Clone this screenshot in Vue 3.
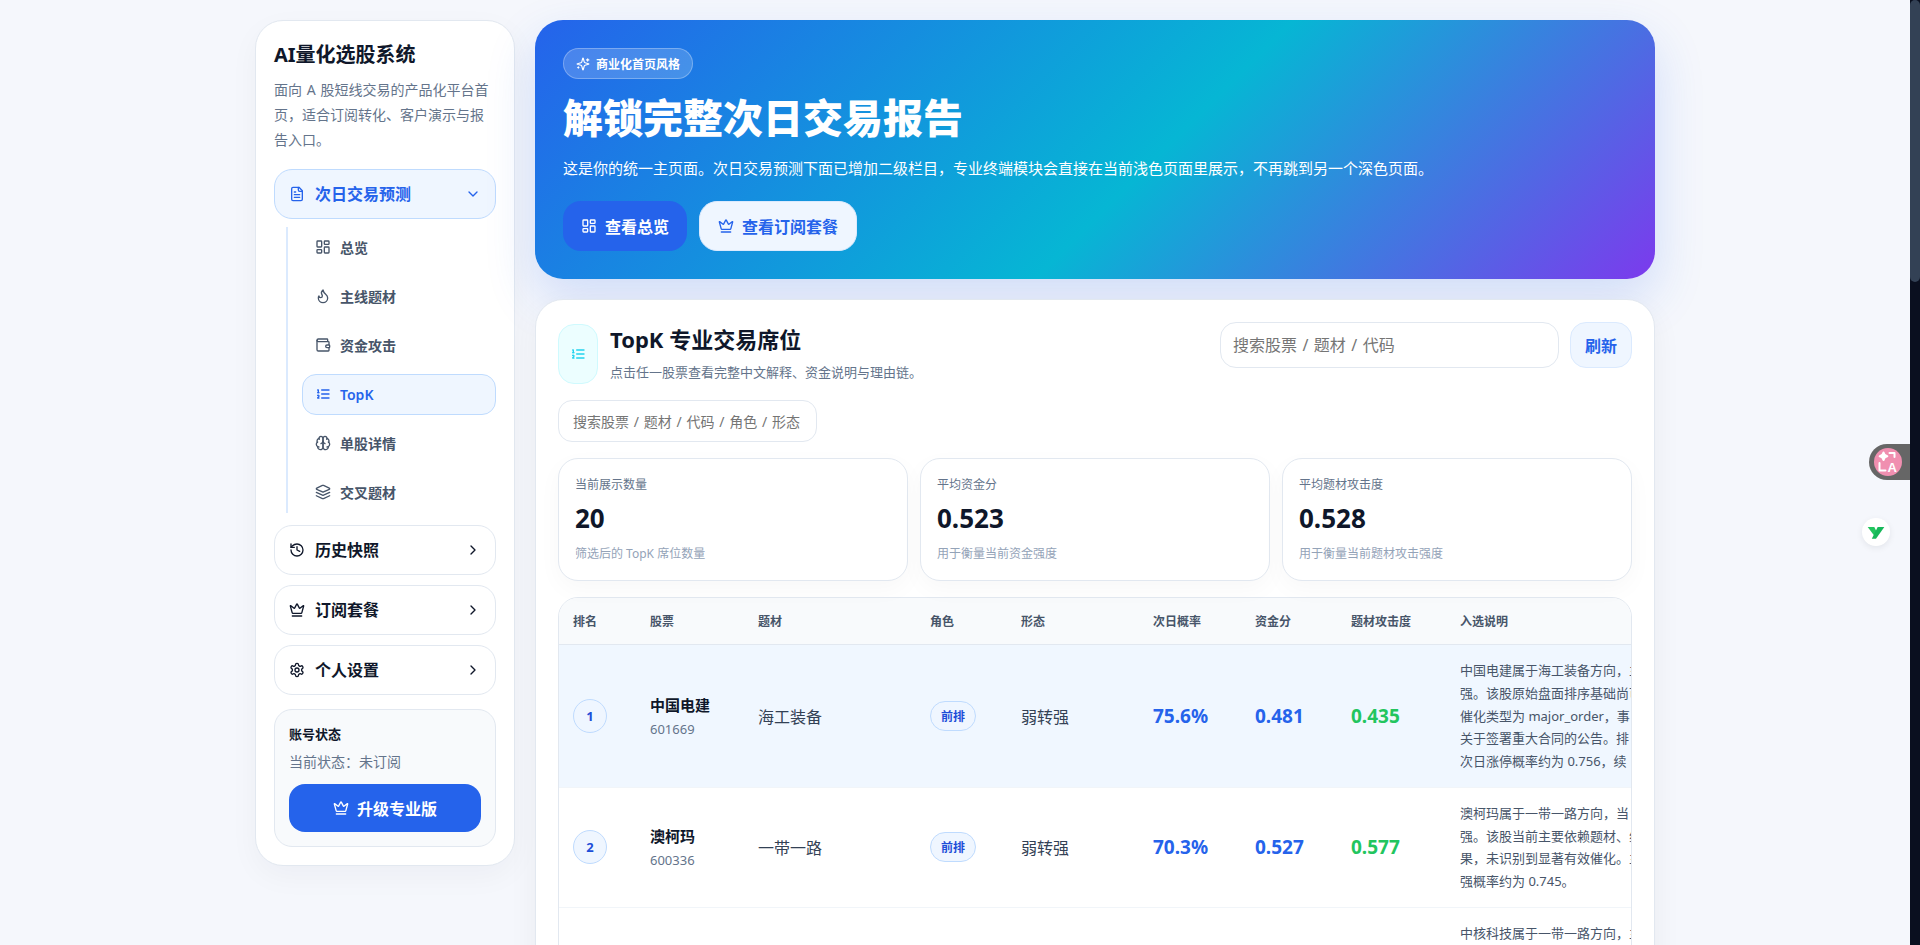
<script setup>
import { h } from 'vue'

const icons = {
  file: ['M15 2H6a2 2 0 0 0-2 2v16a2 2 0 0 0 2 2h12a2 2 0 0 0 2-2V7Z', 'M14 2v4a2 2 0 0 0 2 2h4', 'M10 9H8', 'M16 13H8', 'M16 17H8'],
  down: ['m6 9 6 6 6-6'],
  right: ['m9 18 6-6-6-6'],
  dashboard: ['M4 3h5a1 1 0 0 1 1 1v7a1 1 0 0 1-1 1H4a1 1 0 0 1-1-1V4a1 1 0 0 1 1-1Z', 'M15 3h5a1 1 0 0 1 1 1v3a1 1 0 0 1-1 1h-5a1 1 0 0 1-1-1V4a1 1 0 0 1 1-1Z', 'M15 12h5a1 1 0 0 1 1 1v7a1 1 0 0 1-1 1h-5a1 1 0 0 1-1-1v-7a1 1 0 0 1 1-1Z', 'M4 16h5a1 1 0 0 1 1 1v3a1 1 0 0 1-1 1H4a1 1 0 0 1-1-1v-3a1 1 0 0 1 1-1Z'],
  flame: ['M8.5 14.5A2.5 2.5 0 0 0 11 12c0-1.38-.5-2-1-3-1.072-2.143-.224-4.054 2-6 .5 2.5 2 4.9 4 6.5 2 1.6 3 3.5 3 5.5a7 7 0 1 1-14 0c0-1.153.433-2.294 1-3a2.5 2.5 0 0 0 2.5 2.5z'],
  wallet: ['M19 7V4a1 1 0 0 0-1-1H5a2 2 0 0 0 0 4h15a1 1 0 0 1 1 1v4h-3a2 2 0 0 0 0 4h3a1 1 0 0 0 1-1v-2a1 1 0 0 0-1-1', 'M3 5v14a2 2 0 0 0 2 2h15a1 1 0 0 0 1-1v-4'],
  list: ['M10 12h11', 'M10 18h11', 'M10 6h11', 'M4 10h2', 'M4 6h1v4', 'M6 18H4c0-1 2-2 2-3s-1-1.5-2-1'],
  brain: ['M12 5a3 3 0 1 0-5.997.125 4 4 0 0 0-2.526 5.77 4 4 0 0 0 .556 6.588A4 4 0 1 0 12 18Z', 'M12 5a3 3 0 1 1 5.997.125 4 4 0 0 1 2.526 5.77 4 4 0 0 1-.556 6.588A4 4 0 1 1 12 18Z', 'M15 13a4.5 4.5 0 0 1-3-4 4.5 4.5 0 0 1-3 4', 'M17.599 6.5a3 3 0 0 0 .399-1.375', 'M6.003 5.125A3 3 0 0 0 6.401 6.5', 'M3.477 10.896a4 4 0 0 1 .585-.396', 'M19.938 10.5a4 4 0 0 1 .585.396', 'M6 18a4 4 0 0 1-1.967-.516', 'M19.967 17.484A4 4 0 0 1 18 18'],
  layers: ['m12.83 2.18a2 2 0 0 0-1.66 0L2.6 6.08a1 1 0 0 0 0 1.83l8.58 3.91a2 2 0 0 0 1.66 0l8.58-3.9a1 1 0 0 0 0-1.83Z', 'm22 17.65-9.17 4.16a2 2 0 0 1-1.66 0L2 17.65', 'm22 12.65-9.17 4.16a2 2 0 0 1-1.66 0L2 12.65'],
  history: ['M3 12a9 9 0 1 0 9-9 9.75 9.75 0 0 0-6.74 2.74L3 8', 'M3 3v5h5', 'M12 7v5l4 2'],
  crown: ['M11.562 3.266a.5.5 0 0 1 .876 0L15.39 8.87a1 1 0 0 0 1.516.294L21.183 5.5a.5.5 0 0 1 .798.519l-2.834 10.246a1 1 0 0 1-.956.734H5.81a1 1 0 0 1-.957-.734L2.02 6.02a.5.5 0 0 1 .798-.519l4.276 3.664a1 1 0 0 0 1.516-.294z', 'M5 21h14'],
  settings: ['M12.22 2h-.44a2 2 0 0 0-2 2v.18a2 2 0 0 1-1 1.73l-.43.25a2 2 0 0 1-2 0l-.15-.08a2 2 0 0 0-2.73.73l-.22.38a2 2 0 0 0 .73 2.73l.15.1a2 2 0 0 1 1 1.72v.51a2 2 0 0 1-1 1.74l-.15.09a2 2 0 0 0-.73 2.73l.22.38a2 2 0 0 0 2.73.73l.15-.08a2 2 0 0 1 2 0l.43.25a2 2 0 0 1 1 1.73V20a2 2 0 0 0 2 2h.44a2 2 0 0 0 2-2v-.18a2 2 0 0 1 1-1.73l.43-.25a2 2 0 0 1 2 0l.15.08a2 2 0 0 0 2.73-.73l.22-.39a2 2 0 0 0-.73-2.73l-.15-.08a2 2 0 0 1-1-1.74v-.5a2 2 0 0 1 1-1.74l.15-.09a2 2 0 0 0 .73-2.73l-.22-.38a2 2 0 0 0-2.73-.73l-.15.08a2 2 0 0 1-2 0l-.43-.25a2 2 0 0 1-1-1.73V4a2 2 0 0 0-2-2z', 'M15 12a3 3 0 1 1-6 0 3 3 0 0 1 6 0Z'],
  sparkles: ['M9.937 15.5A2 2 0 0 0 8.5 14.063l-6.135-1.582a.5.5 0 0 1 0-.962L8.5 9.936A2 2 0 0 0 9.937 8.5l1.582-6.135a.5.5 0 0 1 .963 0L14.063 8.5A2 2 0 0 0 15.5 9.937l6.135 1.581a.5.5 0 0 1 0 .964L15.5 14.063a2 2 0 0 0-1.437 1.437l-1.582 6.135a.5.5 0 0 1-.963 0z', 'M20 3v4', 'M22 5h-4', 'M4 17v2', 'M5 18H3']
}

const Icon = (props) =>
  h(
    'svg',
    {
      viewBox: '0 0 24 24',
      width: props.size || 16,
      height: props.size || 16,
      fill: 'none',
      stroke: 'currentColor',
      'stroke-width': 2,
      'stroke-linecap': 'round',
      'stroke-linejoin': 'round',
      style: { flexShrink: 0 }
    },
    icons[props.name].map((d) => h('path', { d }))
  )
Icon.props = ['name', 'size']

const subItems = [
  { label: '总览', icon: 'dashboard' },
  { label: '主线题材', icon: 'flame' },
  { label: '资金攻击', icon: 'wallet' },
  { label: 'TopK', icon: 'list', active: true },
  { label: '单股详情', icon: 'brain' },
  { label: '交叉题材', icon: 'layers' }
]

const navItems = [
  { label: '历史快照', icon: 'history' },
  { label: '订阅套餐', icon: 'crown' },
  { label: '个人设置', icon: 'settings' }
]

const kpis = [
  { label: '当前展示数量', value: '20', note: '筛选后的 TopK 席位数量' },
  { label: '平均资金分', value: '0.523', note: '用于衡量当前资金强度' },
  { label: '平均题材攻击度', value: '0.528', note: '用于衡量当前题材攻击强度' }
]

const columns = ['排名', '股票', '题材', '角色', '形态', '次日概率', '资金分', '题材攻击度', '入选说明']

const rows = [
  {
    rank: 1,
    name: '中国电建',
    code: '601669',
    theme: '海工装备',
    role: '前排',
    form: '弱转强',
    prob: '75.6%',
    fund: '0.481',
    heat: '0.435',
    highlight: true,
    note: [
      '中国电建属于海工装备方向，主',
      '强。该股原始盘面排序基础尚可',
      '催化类型为 major_order，事',
      '关于签署重大合同的公告。排',
      '次日涨停概率约为 0.756，续'
    ]
  },
  {
    rank: 2,
    name: '澳柯玛',
    code: '600336',
    theme: '一带一路',
    role: '前排',
    form: '弱转强',
    prob: '70.3%',
    fund: '0.527',
    heat: '0.577',
    note: [
      '澳柯玛属于一带一路方向，当',
      '强。该股当前主要依赖题材、线',
      '果，未识别到显著有效催化。主',
      '强概率约为 0.745。'
    ]
  },
  {
    rank: 3,
    name: '中核科技',
    theme: '一带一路',
    note: ['中核科技属于一带一路方向，主', '&nbsp;', '&nbsp;', '&nbsp;', '&nbsp;']
  }
]
</script>

<template>
  <div class="shell">
    <div class="page">
      <aside class="side">
        <h2 class="brand">AI量化选股系统</h2>
        <p class="brand-desc">面向 A 股短线交易的产品化平台首页，适合订阅转化、客户演示与报告入口。</p>

        <nav class="nav">
          <div>
            <div class="nav-item nav-open">
              <Icon name="file" />
              <span class="nav-label">次日交易预测</span>
              <Icon name="down" />
            </div>
            <div class="sub-list">
              <div v-for="item in subItems" :key="item.label" class="sub-item" :class="{ 'sub-active': item.active }">
                <Icon :name="item.icon" />
                <span>{{ item.label }}</span>
              </div>
            </div>
          </div>
          <div v-for="item in navItems" :key="item.label" class="nav-item">
            <Icon :name="item.icon" />
            <span class="nav-label">{{ item.label }}</span>
            <Icon name="right" />
          </div>
        </nav>

        <div class="account">
          <div class="account-title">账号状态</div>
          <div class="account-status">当前状态：未订阅</div>
          <button class="upgrade"><Icon name="crown" />升级专业版</button>
        </div>
      </aside>

      <main class="main">
        <section class="hero">
          <div class="badge"><Icon name="sparkles" :size="14" />商业化首页风格</div>
          <h1 class="hero-title">解锁完整次日交易报告</h1>
          <p class="hero-text">这是你的统一主页面。次日交易预测下面已增加二级栏目，专业终端模块会直接在当前浅色页面里展示，不再跳到另一个深色页面。</p>
          <div class="hero-actions">
            <button class="btn btn-primary"><Icon name="dashboard" />查看总览</button>
            <button class="btn btn-light"><Icon name="crown" />查看订阅套餐</button>
          </div>
        </section>

        <section class="panel">
          <div class="panel-head">
            <div class="panel-heading">
              <div class="panel-icon"><Icon name="list" /></div>
              <div>
                <h2 class="panel-title">TopK 专业交易席位</h2>
                <p class="panel-sub">点击任一股票查看完整中文解释、资金说明与理由链。</p>
              </div>
            </div>
            <div class="panel-tools">
              <input class="search" placeholder="搜索股票 / 题材 / 代码" />
              <button class="refresh">刷新</button>
            </div>
          </div>

          <input class="filter" placeholder="搜索股票 / 题材 / 代码 / 角色 / 形态" />

          <div class="kpis">
            <div v-for="kpi in kpis" :key="kpi.label" class="kpi">
              <div class="kpi-label">{{ kpi.label }}</div>
              <div class="kpi-value">{{ kpi.value }}</div>
              <div class="kpi-note">{{ kpi.note }}</div>
            </div>
          </div>

          <div class="table-wrap">
            <table class="table">
              <colgroup>
                <col style="width: 77px" />
                <col style="width: 108px" />
                <col style="width: 172px" />
                <col style="width: 91px" />
                <col style="width: 132px" />
                <col style="width: 102px" />
                <col style="width: 96px" />
                <col style="width: 109px" />
                <col style="width: 186px" />
              </colgroup>
              <thead>
                <tr>
                  <th v-for="col in columns" :key="col">{{ col }}</th>
                </tr>
              </thead>
              <tbody>
                <tr v-for="row in rows" :key="row.rank" :class="{ 'row-on': row.highlight }">
                  <td><span class="rank">{{ row.rank }}</span></td>
                  <td>
                    <div class="stock-name">{{ row.name }}</div>
                    <div class="stock-code">{{ row.code }}</div>
                  </td>
                  <td class="plain">{{ row.theme }}</td>
                  <td><span v-if="row.role" class="role">{{ row.role }}</span></td>
                  <td class="plain">{{ row.form }}</td>
                  <td class="num">{{ row.prob }}</td>
                  <td class="num">{{ row.fund }}</td>
                  <td class="num heat">{{ row.heat }}</td>
                  <td class="note">
                    <div v-for="(line, i) in row.note" :key="i" v-html="line"></div>
                  </td>
                </tr>
              </tbody>
            </table>
          </div>
        </section>
      </main>
    </div>

    <div class="rail"><div class="rail-thumb"></div></div>

    <div class="float-translate">
      <span class="float-dot">
        <svg viewBox="0 0 24 24" width="24" height="24" fill="none" stroke="#fff" stroke-width="2" stroke-linecap="round" stroke-linejoin="round">
          <path d="M7.5 2.5c.4 2.4 1.4 3.4 3.8 3.8-2.4.4-3.4 1.4-3.8 3.8-.4-2.4-1.4-3.4-3.8-3.8 2.4-.4 3.4-1.4 3.8-3.8Z" fill="#fff" />
          <path d="M13.5 3h5v4" />
          <path d="M3.5 13v7.5h6" />
          <text x="11.5" y="21.5" font-size="13" font-weight="700" fill="#fff" stroke="none" font-family="Liberation Sans, sans-serif">A</text>
        </svg>
      </span>
    </div>
    <div class="float-logo">
      <svg viewBox="0 0 24 24" width="20" height="20">
        <path d="M2 6h8l3 6-3.5 4Z" fill="#22c55e" />
        <path d="M14 6h8L12 20H7Z" fill="#16b85a" />
      </svg>
    </div>
  </div>
</template>

<style>
body {
  background: #f5f7fc;
}
</style>

<style scoped>
.shell {
  padding-right: 10px;
}
.page {
  width: 1400px;
  min-height: 3167px;
  margin: 0 auto;
  padding: 20px 0;
  box-sizing: border-box;
  display: flex;
  align-items: flex-start;
  gap: 20px;
  font-family: "Noto Sans", "Noto Sans CJK SC", sans-serif;
  color: #0f172a;
}
h1, h2, p {
  margin: 0;
}
button {
  font-family: inherit;
  cursor: pointer;
}

.side {
  width: 260px;
  flex-shrink: 0;
  box-sizing: border-box;
  padding: 18px;
  background: #fff;
  border: 1px solid #e2e8f0;
  border-radius: 28px;
  box-shadow: 0 10px 30px rgba(15, 23, 42, 0.04);
}
.brand {
  font-size: 20px;
  line-height: 32px;
  font-weight: 700;
}
.brand-desc {
  margin-top: 6px;
  font-size: 14px;
  line-height: 25.2px;
  color: #64748b;
  word-spacing: 0.08em;
}
.nav {
  margin-top: 16px;
  display: flex;
  flex-direction: column;
  gap: 10px;
}
.nav-item {
  height: 50px;
  box-sizing: border-box;
  padding: 0 14px;
  display: flex;
  align-items: center;
  gap: 10px;
  background: #fff;
  border: 1px solid #e2e8f0;
  border-radius: 18px;
  font-size: 16px;
  font-weight: 700;
}
.nav-label {
  flex: 1;
  margin-top: -2px;
}
.nav-open {
  background: #eff6ff;
  border-color: #bfdbfe;
  color: #2563eb;
}
.sub-list {
  margin: 8px 0 2px 12px;
  padding-left: 14px;
  border-left: 2px solid #dbeafe;
  display: flex;
  flex-direction: column;
  gap: 8px;
}
.sub-item {
  height: 41px;
  box-sizing: border-box;
  padding: 0 12px;
  display: flex;
  align-items: center;
  gap: 9px;
  border: 1px solid transparent;
  border-radius: 14px;
  font-size: 14px;
  font-weight: 600;
  color: #475569;
}
.sub-active {
  background: #eff6ff;
  border-color: #bfdbfe;
  color: #2563eb;
}
.account {
  margin-top: 14px;
  padding: 14px;
  background: #f8fafc;
  border: 1px solid #e2e8f0;
  border-radius: 18px;
}
.account-title {
  font-size: 13px;
  line-height: 20px;
  font-weight: 700;
}
.account-status {
  margin-top: 7px;
  font-size: 14px;
  line-height: 22px;
  color: #64748b;
}
.upgrade {
  margin-top: 11px;
  width: 100%;
  height: 48px;
  display: flex;
  align-items: center;
  justify-content: center;
  gap: 8px;
  background: #2563eb;
  border: none;
  border-radius: 16px;
  color: #fff;
  font-size: 16px;
  font-weight: 700;
}

.main {
  flex: 1;
  min-width: 0;
  align-self: stretch;
  display: flex;
  flex-direction: column;
  gap: 20px;
}
.hero {
  padding: 28px;
  border-radius: 28px;
  background: linear-gradient(135deg, #2563eb 0%, #06b6d4 55%, #7c3aed 100%);
  box-shadow: 0 20px 50px rgba(37, 99, 235, 0.18);
  color: #fff;
}
.badge {
  display: inline-flex;
  align-items: center;
  gap: 6px;
  height: 31px;
  box-sizing: border-box;
  padding: 0 12px;
  background: rgba(255, 255, 255, 0.18);
  border: 1px solid rgba(255, 255, 255, 0.28);
  border-radius: 999px;
  font-size: 12px;
  font-weight: 700;
  vertical-align: top;
}
.hero-title {
  margin-top: 14px;
  font-size: 40px;
  line-height: 50px;
  font-weight: 800;
}
.hero-text {
  margin-top: 13px;
  font-size: 15px;
  line-height: 24px;
}
.hero-actions {
  margin-top: 21px;
  display: flex;
  gap: 12px;
}
.btn {
  height: 50px;
  display: inline-flex;
  align-items: center;
  gap: 8px;
  padding: 0 18px;
  border: none;
  border-radius: 18px;
  font-size: 16px;
  font-weight: 700;
}
.btn-primary {
  background: #2563eb;
  color: #fff;
}
.btn-light {
  background: #eff6ff;
  border: 1px solid #dbeafe;
  color: #2563eb;
}

.panel {
  flex: 1;
  padding: 22px;
  background: #fff;
  border: 1px solid #e2e8f0;
  border-radius: 28px;
  box-shadow: 0 10px 30px rgba(15, 23, 42, 0.05);
}
.panel-head {
  display: flex;
  justify-content: space-between;
  align-items: flex-start;
}
.panel-heading {
  display: flex;
  gap: 12px;
  padding-top: 2px;
}
.panel-icon {
  width: 40px;
  box-sizing: border-box;
  display: flex;
  align-items: center;
  justify-content: center;
  background: #ecfeff;
  border: 1px solid #cffafe;
  border-radius: 16px;
  color: #22d3ee;
}
.panel-title {
  font-size: 22px;
  line-height: 30px;
  font-weight: 700;
}
.panel-sub {
  margin-top: 7px;
  padding-bottom: 1px;
  font-size: 13px;
  line-height: 22px;
  color: #64748b;
}
.panel-tools {
  display: flex;
  gap: 11px;
}
.search {
  width: 339px;
  height: 46px;
  box-sizing: border-box;
  padding: 0 12px;
  border: 1px solid #e2e8f0;
  border-radius: 16px;
  font-family: inherit;
  font-size: 16px;
  word-spacing: 0.08em;
  outline: none;
}
.refresh {
  width: 62px;
  height: 46px;
  padding: 0;
  background: #eff6ff;
  border: 1px solid #dbeafe;
  border-radius: 16px;
  color: #2563eb;
  font-size: 16px;
  font-weight: 600;
}
.filter {
  display: block;
  margin-top: 16px;
  width: 259px;
  height: 42px;
  box-sizing: border-box;
  padding: 0 14px;
  border: 1px solid #e2e8f0;
  border-radius: 14px;
  font-family: inherit;
  font-size: 14px;
  word-spacing: 0.08em;
  outline: none;
}
.kpis {
  margin-top: 16px;
  display: grid;
  grid-template-columns: repeat(3, 1fr);
  gap: 12px;
}
.kpi {
  padding: 17px 16px;
  border: 1px solid #e2e8f0;
  border-radius: 20px;
  background: #fff;
  box-shadow: 0 8px 24px rgba(15, 23, 42, 0.03);
}
.kpi-label {
  font-size: 12px;
  line-height: 18px;
  color: #64748b;
}
.kpi-value {
  margin-top: 7px;
  font-size: 26px;
  line-height: 34px;
  font-weight: 700;
}
.kpi-note {
  margin-top: 10px;
  font-size: 12px;
  line-height: 18px;
  color: #94a3b8;
}

.table-wrap {
  margin-top: 16px;
  border: 1px solid #e2e8f0;
  border-radius: 20px;
  overflow: hidden;
}
.table {
  width: 1073px;
  table-layout: fixed;
  border-collapse: collapse;
}
th {
  height: 46px;
  padding: 0 14px;
  text-align: left;
  background: #f8fafc;
  border-bottom: 1px solid #e2e8f0;
  font-size: 12px;
  font-weight: 700;
  color: #475569;
}
td {
  padding: 14px;
  vertical-align: middle;
  border-bottom: 1px solid #f1f5f9;
}
.row-on td {
  background: #f0f7ff;
}
.rank {
  width: 34px;
  height: 34px;
  box-sizing: border-box;
  display: flex;
  align-items: center;
  justify-content: center;
  background: #eff6ff;
  border: 1px solid #bfdbfe;
  border-radius: 50%;
  color: #1d4ed8;
  font-size: 13px;
  font-weight: 700;
}
.stock-name {
  font-size: 15px;
  line-height: 22px;
  font-weight: 700;
}
.stock-code {
  margin-top: 4px;
  font-size: 13px;
  line-height: 18px;
  color: #64748b;
}
.plain {
  font-size: 16px;
  color: #334155;
}
.role {
  display: inline-flex;
  align-items: center;
  height: 30px;
  box-sizing: border-box;
  padding: 0 10px;
  background: #eff6ff;
  border: 1px solid #bfdbfe;
  border-radius: 999px;
  color: #1d4ed8;
  font-size: 12px;
  font-weight: 700;
}
.num {
  font-size: 19px;
  font-weight: 700;
  color: #2563eb;
}
.heat {
  color: #22c55e;
}
.note {
  font-size: 13px;
  line-height: 22.75px;
  color: #475569;
  padding-right: 0;
  white-space: nowrap;
  overflow: hidden;
}

.rail {
  position: fixed;
  top: 0;
  right: 0;
  bottom: 0;
  width: 10px;
  background: #0a0f1f;
}
.rail-thumb {
  height: 282px;
  background: #334155;
  border-radius: 5px;
}
.float-translate {
  position: fixed;
  top: 444px;
  right: 10px;
  width: 41px;
  height: 36px;
  box-sizing: border-box;
  padding-left: 5px;
  display: flex;
  align-items: center;
  background: #666;
  border-radius: 18px 0 0 18px;
}
.float-dot {
  width: 28px;
  height: 28px;
  display: flex;
  align-items: center;
  justify-content: center;
  background: #f08fb0;
  border-radius: 50%;
}
.float-logo {
  position: fixed;
  top: 518px;
  left: 1862px;
  width: 28px;
  height: 28px;
  display: flex;
  align-items: center;
  justify-content: center;
  background: #fff;
  border-radius: 50%;
  box-shadow: 0 2px 6px rgba(15, 23, 42, 0.08);
}
</style>
